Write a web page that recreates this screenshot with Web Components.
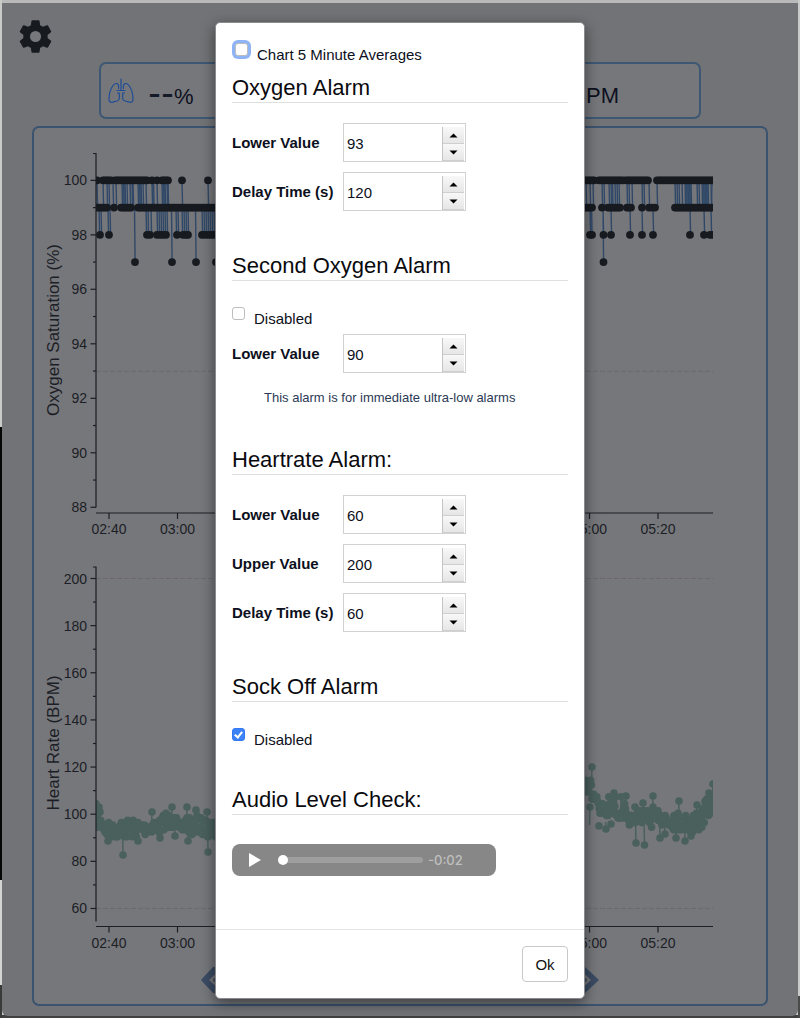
<!DOCTYPE html>
<html lang="en">
<head>
<meta charset="utf-8">
<meta name="viewport" content="width=device-width, initial-scale=1">
<title>Oxygen monitor</title>
<style>
html { background: #c6c8c7; }
body {
  margin: 0;
  font-family: "Liberation Sans", Arial, sans-serif;
  font-size: 15px;
  color: #0d1020;
  background:
    linear-gradient(#c9cbc9 0 427px, #060606 427px 880px, #d3d5d3 880px 985px, #3a3a3a 985px) left / 2px 100% no-repeat,
    linear-gradient(#c9caca 0 996px, #4a4a4a 996px) right / 2px 100% no-repeat,
    linear-gradient(#404040, #404040) bottom / 100% 3px no-repeat,
    linear-gradient(#b9b9b9, #b9b9b9) top / 100% 3px no-repeat;
}
</style>
</head>
<body>
<monitor-app></monitor-app>
<script>
const make = (name, html, setup) => {
  const template = document.createElement('template');
  template.innerHTML = html;
  customElements.define(name, class extends HTMLElement {
    constructor() {
      super();
      this.attachShadow({ mode: 'open' }).append(template.content.cloneNode(true));
    }
    connectedCallback() {
      if (setup && !this.ready) { this.ready = true; setup(this, this.shadowRoot); }
    }
  });
};

const range = (from, to, step) => {
  const out = [];
  for (let v = from; v <= to; v += step) out.push(v);
  return out;
};

/* ---------- charts ---------- */
const chartFrame = (el, root, o) => {
  const svg = root.querySelector('svg');
  let s = '';
  for (const y of o.limits) s += `<path class="limit" d="M96 ${y}H713"/>`;
  s += o.series;
  s += `<path class="axis" d="M93 ${o.top}H96V${o.bottom}M96 ${o.base}H713"/>`;
  for (const [label, y] of o.major)
    s += `<path class="axis" d="M90.5 ${y}H96"/><text x="87" y="${y + 5}" text-anchor="end">${label}</text>`;
  for (const y of o.minor) s += `<path class="axis" d="M93 ${y}H96"/>`;
  for (const [label, x] of [['02:40', 109], ['03:00', 177.5], ['05:00', 589.5], ['05:20', 658]])
    s += `<path class="axis" d="M${x} ${o.base}v6"/><text x="${x}" y="${o.base + 21}" text-anchor="middle">${label}</text>`;
  s += `<text class="title" transform="translate(59 ${o.mid}) rotate(-90)" text-anchor="middle">${o.title}</text>`;
  svg.innerHTML = `<defs><clipPath id="plot"><rect x="96" y="${o.top}" width="617" height="${o.base - o.top}"/></clipPath></defs>` + s;
};

const chartStyle = `<style>
:host { display: block; }
svg { display: block; width: 100%; height: auto; font-size: 14px; fill: #1c1e26; }
.title { font-size: 17px; }
.axis { stroke: #1c1e26; stroke-width: 1.2; fill: none; }
.limit { stroke: #6f676b; stroke-width: 1; stroke-dasharray: 5 2; fill: none; }
</style>`;

make('oxygen-chart', chartStyle + '<svg viewBox="34 128 732 416" role="img" aria-label="Oxygen saturation"></svg>', (el, root) => {
  const y = v => 180.3 + (100 - v) * 27.25;
  const dots = {
    100: [97, ...range(103, 111, 2), ...range(115, 147, 2), 152, 157, ...range(162, 169, 2), 182, 208,
      ...range(580, 594, 2), ...range(599, 623, 2), ...range(626, 649, 2), ...range(657, 713, 2)],
    99: [...range(97, 107, 2), 114, ...range(121, 132, 2), ...range(138, 218, 2),
      ...range(580, 593, 2), 602, ...range(608, 620, 2), ...range(627, 632, 2), 642, 649, 652, 655, ...range(675, 713, 2)],
    98: [100, 109, 147, 150, 157, 160, 163, 166, 177, 183, 186, 188, ...range(202, 218, 3),
      590, 592, 603.5, 611, 630, 642, 653, 690, 704, 710, 713],
    97: [135, 172, 196, 216, 603.5]
  };
  const upper = [97, 103, 107, 109, 113, 116, 122, 123.5, 125, 127, 130, 132, 133, 138, 139.5, 141, 143, 146, 152, 153.5, 157, 162, 163.5, 165, 167, 168,
    182, 208, 586, 590, 593, 602, 604, 609, 611, 612.5, 615, 617, 619, 627, 629, 632, 642, 644, 649, 657, 675, 677, 679, 682,
    685, 686.5, 688, 689.5, 691, 697, 699, 702, 703.5, 705, 706.5, 708, 711, 713];
  const lower = [99, 101, 108, 110, 146, 148, 151, 157, 159, 161, 163, 165, 167, 176, 178, 182, 184, 186, 188,
    202, 204, 206, 208, 210, 212, 214, 590, 591.5, 603, 611, 630, 642, 653, 690, 704, 711];
  let d = '';
  for (const x of upper) d += `M${x} ${y(100)}l.6 27.2`;
  for (const x of lower) d += `M${x} ${y(99)}l.6 27.2`;
  for (const x of dots[97]) d += `M${x - 0.5} ${y(99)}l.6 54.4`;
  let c = '';
  for (const v in dots) for (const x of dots[v]) c += `<circle cx="${x}" cy="${y(+v)}" r="3.9"/>`;
  chartFrame(el, root, {
    top: 153.5, bottom: 507.5, base: 513, mid: 330, title: 'Oxygen Saturation (%)', limits: [371.3],
    major: [100, 98, 96, 94, 92, 90, 88].map(v => [v, y(v)]),
    minor: [99, 97, 95, 93, 91, 89].map(y),
    series: `<g clip-path="url(#plot)"><path d="${d}" stroke="#304868" stroke-width="1.4" fill="none"/><g fill="#171b20">${c}</g></g>`
  });
});

make('heart-chart', chartStyle + '<svg viewBox="34 544 732 416" role="img" aria-label="Heart rate"></svg>', (el, root) => {
  const y = v => 578.5 + (200 - v) * 2.357;
  let seed = 7;
  const random = () => (seed = (seed * 16807) % 2147483647) / 2147483647;
  /* [x, highest, lowest] band of readings; values in between are interpolated */
  const bands = [
    [[96, 803, 828], [101, 815, 830], [107, 822, 838], [115, 823, 839], [122, 819, 838], [130, 820, 838], [142, 820, 838],
      [150, 820, 833], [160, 819, 834], [166, 812, 828], [175, 819, 830], [188, 819, 832], [197, 815, 836], [206, 819, 836], [216, 817, 838]],
    [[585, 770, 800], [592, 777, 800], [596, 796, 800], [601, 802, 818], [608, 797, 822], [614, 795, 820], [623, 796, 820],
      [627, 815, 826], [636, 812, 822], [643, 808, 822], [650, 812, 828], [658, 809, 820], [668, 808, 832], [674, 806, 829],
      [681, 815, 831], [687, 813, 832], [694, 808, 836], [701, 808, 831], [706, 800, 822], [713, 792, 810]]
  ];
  const pts = [[99, 807], [100, 812], [108, 841], [123, 855], [138, 841], [152, 812], [160, 838], [172, 807], [175, 836],
    [187, 807], [188, 841], [196, 810], [207, 812], [208, 852], [592, 767], [590, 807], [599, 826], [606, 829], [611, 824],
    [614, 793], [626, 796], [635, 807], [636, 843], [643, 803], [644.5, 845], [653, 796], [653, 807], [660, 838], [665, 834],
    [676, 838], [679, 801], [685, 841], [691, 836], [697, 805], [709, 793], [713, 784]];
  let d = '';
  for (const [x, v] of pts) d += `M${x} ${v}L${x - 0.5} ${v < 815 ? Math.min(v + 20, 825) : 822}`;
  for (const band of bands) {
    let line = '';
    for (let i = 0; i < band.length - 1; i++) {
      const [x0, a0, b0] = band[i], [x1, a1, b1] = band[i + 1];
      for (let x = x0; x < x1; x += 0.8) {
        const t = (x - x0) / (x1 - x0), a = a0 + (a1 - a0) * t, b = b0 + (b1 - b0) * t;
        const v = Math.round((a + (b - a) * random()) / 2.357) * 2.357;
        pts.push([x, v]);
        line += `${line ? 'L' : 'M'}${x.toFixed(1)} ${v.toFixed(1)}`;
      }
    }
    d += line;
  }
  const c = pts.map(([x, v]) => `<circle cx="${x.toFixed(1)}" cy="${v.toFixed(1)}" r="3.8"/>`).join('');
  chartFrame(el, root, {
    top: 567, bottom: 921.5, base: 926.5, mid: 743, title: 'Heart Rate (BPM)', limits: [y(200), y(60)],
    major: [200, 180, 160, 140, 120, 100, 80, 60].map(v => [v, y(v)]),
    minor: [190, 170, 150, 130, 110, 90, 70].map(y),
    series: `<g clip-path="url(#plot)"><path d="${d}" stroke="#4a605d" stroke-width="1.5" fill="none"/><g fill="#4a605d">${c}</g></g>`
  });
});

/* ---------- page behind the dialog ---------- */
make('status-bar', `<style>
:host { display: flex; align-items: center; justify-content: space-between; box-sizing: border-box; height: 57px;
  margin: 0 97px; padding: 0 80px 0 7px; border: 2px solid #3e5874; border-radius: 7px; background: #76777b;
  font-size: 22px; line-height: 24px; }
.reading { display: flex; align-items: center; }
svg { display: block; width: 26px; height: 26px; margin-right: 14px; }
.value { padding-top: 10px; }
.value b { font: 600 28px/24px Inter, sans-serif; color: #151a28; }
</style>
<div class="reading">
  <svg viewBox="0 0 26 26" fill="none" stroke="#1f4c96" stroke-width="1.2" stroke-linecap="round" stroke-linejoin="round" aria-hidden="true">
    <path d="M13 1V12.500M9 12.500H17M11.300 15.500V20.500C11.300 22 10.500 22.500 9 23L4.500 24.200C2.300 24.700 1 23.500 1 21.200 1 17 2.500 11 5 7.500 7.200 4.600 10.600 4.800 10.600 8.500V10.500M14.700 15.500V20.500C14.700 22 15.500 22.500 17 23L21.500 24.200C23.700 24.700 25 23.500 25 21.200 25 17 23.500 11 21 7.500 18.800 4.600 15.400 4.800 15.400 8.500V10.500M9.500 15H11.300M14.700 15H16.500"/>
  </svg>
  <span class="value"><b>--</b>%</span>
</div>
<span class="value">BPM</span>`);

make('chart-panel', `<style>
:host { display: block; margin: 7px 30px 0; border: 2px solid #3b536f; border-radius: 7px; background: #76777b; }
nav { display: flex; justify-content: space-between; width: 400px; max-width: 100%; margin: 0 auto; padding: 7px 0 11px; }
button { padding: 0; border: 0; background: none; }
svg { display: block; width: 26px; height: 26px; }
</style>
<slot></slot>
<nav aria-label="Time range">
  <button type="button" aria-label="Earlier"><svg viewBox="0 0 26 26"><path d="M13 0h9L1 13l21 13h-9L1 13z" fill="#3b4c63"/><path d="M15 0 1 13 15 26h8L9 13 23 0z" fill="#3b4c63"/><circle cx="15" cy="13" r="2" fill="#3b4c63"/></svg></button>
  <button type="button" aria-label="Later"><svg viewBox="0 0 26 26"><path d="M11 0 25 13 11 26H3L17 13 3 0z" fill="#3b4c63"/><circle cx="11" cy="13" r="2" fill="#3b4c63"/></svg></button>
</nav>`);

make('gear-button', `<style>
:host { display: block; }
button { display: block; padding: 0; border: 0; background: none; }
svg { display: block; width: 39px; height: 39px; }
</style>
<button type="button" aria-label="Settings"><svg viewBox="0 0 24 24"><path fill="#171b20" d="M19.430 12.980c.04-.32.07-.64.07-.98s-.03-.66-.07-.98l2.110-1.650c.19-.15.24-.42.12-.64l-2-3.460c-.12-.22-.39-.3-.61-.22l-2.490 1c-.52-.4-1.080-.73-1.690-.98l-.38-2.650C14.460 2.180 14.250 2 14 2h-4c-.25 0-.46.18-.49.42l-.38 2.650c-.61.25-1.170.59-1.690.98l-2.490-1c-.23-.09-.49 0-.61.22l-2 3.460c-.13.22-.07.49.12.64l2.110 1.650c-.04.32-.07.65-.07.98s.03.66.07.98l-2.110 1.650c-.19.15-.24.42-.12.64l2 3.460c.12.22.39.3.61.22l2.490-1c.52.4 1.080.73 1.690.98l.38 2.650c.03.24.24.42.49.42h4c.25 0 .46-.18.49-.42l.38-2.650c.61-.25 1.170-.59 1.690-.98l2.490 1c.23.09.49 0 .61-.22l2-3.460c.12-.22.07-.49-.12-.64z"/><circle cx="12" cy="12" r="3.400" fill="#77787c"/></svg></button>`);

/* ---------- dialog parts ---------- */
make('check-field', `<style>
:host { display: block; height: 23px; }
div { display: flex; align-items: flex-start; gap: 9px; }
label { line-height: 20px; padding-top: 8px; }
input { appearance: none; box-sizing: border-box; flex: none; width: 13px; height: 13px; margin: 6px 0 0;
  border: 1px solid #bdbdbd; border-radius: 3px; background: #fff; }
input:checked { border-color: #3478f6; background: #3b82f7; }
input:checked::after { content: ""; display: block; width: 3px; height: 6px; margin: 1px 0 0 3px;
  border: solid #fff; border-width: 0 2px 2px 0; transform: rotate(38deg); }
:host([highlighted]) input { margin-left: 3px; box-shadow: 0 0 0 3px #8fb4f5; }
</style>
<div><input type="checkbox" id="box"><label for="box"><slot></slot></label></div>`, (el, root) => {
  root.querySelector('input').checked = el.hasAttribute('checked');
});

make('number-field', `<style>
:host { display: grid; grid-template-columns: 111px 123px; align-items: center; }
label { font-weight: bold; line-height: 20px; padding-top: 1px; white-space: nowrap; }
.box { display: flex; box-sizing: border-box; height: 39px; border: 1px solid #d2d2d2; background: #fff; }
input { appearance: textfield; flex: 1; min-width: 0; margin: 0; padding: 1px 3px 0; border: 0; outline: 0;
  background: none; font: inherit; color: inherit; }
input::-webkit-inner-spin-button { appearance: none; display: none; }
.spin { display: flex; flex-direction: column; width: 21px; margin: 3px 1px 0 0; border-left: 1px solid #c4c4c4; }
.spin button { flex: 1; display: grid; place-items: center; padding: 0; border: 0;
  border-bottom: 1px solid #cfcfcf; background: linear-gradient(#f8f8f8, #e6e6e6); }
svg { display: block; width: 9px; height: 5px; }
</style>
<label for="value"></label>
<div class="box"><input type="number" id="value"><div class="spin">
  <button type="button" aria-label="Increase"><svg viewBox="0 0 9 5"><path d="M4.500 .5 8.500 4.500H.5z"/></svg></button>
  <button type="button" aria-label="Decrease"><svg viewBox="0 0 9 5"><path d="M4.500 4.500 8.500 .5H.5z"/></svg></button>
</div></div>`, (el, root) => {
  const input = root.querySelector('input');
  const [up, down] = root.querySelectorAll('button');
  root.querySelector('label').textContent = el.getAttribute('label');
  input.value = el.getAttribute('value');
  up.onclick = () => input.stepUp();
  down.onclick = () => input.stepDown();
});

make('settings-section', `<style>
:host { display: block; margin-bottom: 41px; }
h2 { margin: 0 0 20px; font-size: 22px; line-height: 28px; font-weight: normal; color: #0a0a0e; border-bottom: 1px solid #dfdfdf; }
.fields { display: flex; flex-direction: column; gap: 10px; }
</style><h2></h2><div class="fields"><slot></slot></div>`, (el, root) => {
  root.querySelector('h2').textContent = el.getAttribute('heading');
});

make('field-note', `<style>
:host { display: block; padding-top: 8px; margin-left: 32px; font-size: 13px; line-height: 14px; color: #2c3a55; }
</style><slot></slot>`);

make('audio-player', `<style>
:host { display: flex; align-items: center; box-sizing: border-box; width: 264px; max-width: 100%; height: 32px;
  margin-top: 9px; padding-left: 13px; border-radius: 8px; background: #878787; }
button { display: grid; place-items: center; width: 20px; height: 20px; padding: 0; border: 0; background: none; margin-right: 13px; }
svg { display: block; width: 12px; height: 14px; }
input { appearance: none; width: 145px; height: 10px; margin: 0 5px 0 0; background: none; }
input::-webkit-slider-runnable-track { height: 6px; border-radius: 3px; background: #9e9e9e; }
input::-webkit-slider-thumb { appearance: none; width: 10px; height: 10px; margin-top: -2px; border-radius: 50%; background: #fff; }
time { font: 500 13px/16px Inter, sans-serif; color: #bfbfbf; }
</style>
<button type="button" aria-label="Play"><svg viewBox="0 0 12 14"><path d="M0 0 12 7 0 14z" fill="#fff"/></svg></button>
<input type="range" min="0" max="2" step="any" value="0" aria-label="Position">
<time>-0:02</time>`);

make('settings-dialog', `<style>
:host { position: absolute; top: 0; left: 0; width: 100%; display: flex; justify-content: center; box-sizing: border-box; padding: 22px 0 20px; }
section { box-sizing: border-box; width: 370px; max-width: 100%; border: 1px solid #8b8b8d; border-radius: 5px;
  background: #fff; box-shadow: 0 4px 14px rgba(0, 0, 0, .5); }
.body { padding: 14px 16px 12px; }
check-field[highlighted] { margin-bottom: 14px; }
footer { display: flex; justify-content: flex-end; padding: 16px; border-top: 1px solid #e3e3e3; }
footer button { width: 46px; height: 36px; padding: 0; border: 1px solid #c9c9c9; border-radius: 4px; background: #fff; font: inherit; color: #111; }
</style>
<section role="dialog" aria-label="Settings">
  <div class="body">
    <check-field highlighted>Chart 5 Minute Averages</check-field>
    <settings-section heading="Oxygen Alarm">
      <number-field label="Lower Value" value="93"></number-field>
      <number-field label="Delay Time (s)" value="120"></number-field>
    </settings-section>
    <settings-section heading="Second Oxygen Alarm">
      <check-field>Disabled</check-field>
      <number-field label="Lower Value" value="90"></number-field>
      <field-note>This alarm is for immediate ultra-low alarms</field-note>
    </settings-section>
    <settings-section heading="Heartrate Alarm:">
      <number-field label="Lower Value" value="60"></number-field>
      <number-field label="Upper Value" value="200"></number-field>
      <number-field label="Delay Time (s)" value="60"></number-field>
    </settings-section>
    <settings-section heading="Sock Off Alarm">
      <check-field checked>Disabled</check-field>
    </settings-section>
    <settings-section heading="Audio Level Check:">
      <audio-player></audio-player>
    </settings-section>
  </div>
  <footer><button type="button">Ok</button></footer>
</section>`);

make('monitor-app', `<style>
:host { display: block; padding: 3px 2px 2px; }
main { display: block; padding-bottom: 10px; border-radius: 0 0 6px 6px; background: #727376; overflow: hidden; }
header { box-sizing: border-box; height: 59px; padding: 14px 0 0 14px; }
</style>
<main>
  <header><gear-button></gear-button></header>
  <status-bar></status-bar>
  <chart-panel><oxygen-chart></oxygen-chart><heart-chart></heart-chart></chart-panel>
</main>
<settings-dialog></settings-dialog>`);
</script>
</body>
</html>
